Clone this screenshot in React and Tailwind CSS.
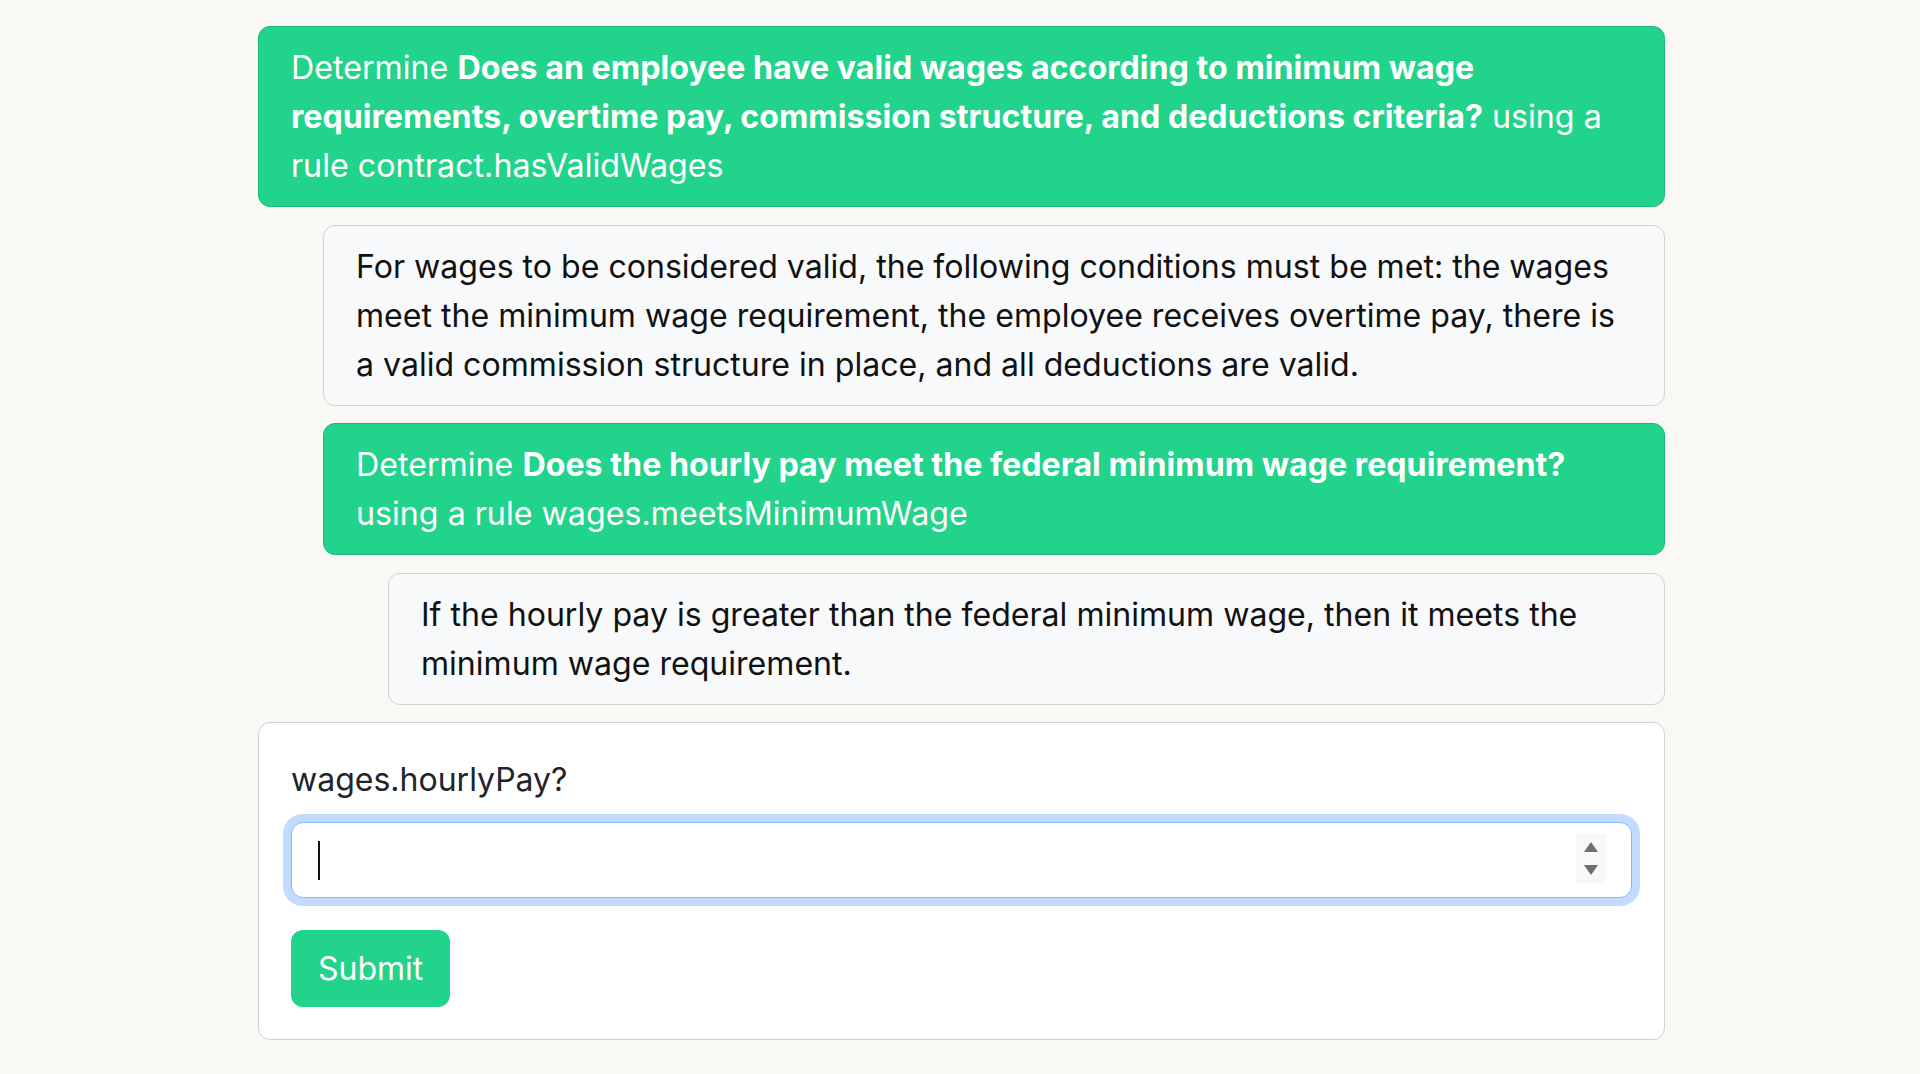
import { useState } from "react";

const steps = [
  {
    kind: "rule",
    depth: 0,
    question:
      "Does an employee have valid wages according to minimum wage requirements, overtime pay, commission structure, and deductions criteria?",
    rule: "contract.hasValidWages",
  },
  {
    kind: "text",
    depth: 1,
    text: "For wages to be considered valid, the following conditions must be met: the wages meet the minimum wage requirement, the employee receives overtime pay, there is a valid commission structure in place, and all deductions are valid.",
  },
  {
    kind: "rule",
    depth: 1,
    question: "Does the hourly pay meet the federal minimum wage requirement?",
    rule: "wages.meetsMinimumWage",
  },
  {
    kind: "text",
    depth: 2,
    text: "If the hourly pay is greater than the federal minimum wage, then it meets the minimum wage requirement.",
  },
];

const indent = ["ml-0", "ml-[65px]", "ml-[130px]"];

const Step = ({ step }) => {
  if (step.kind === "rule") {
    return (
      <div
        className={`${indent[step.depth]} rounded-[12px] border border-[#1cb77b] bg-[#22d38b] px-[32px] py-4 text-[32.2px] leading-[49px] text-white`}
      >
        Determine <span className="font-bold">{step.question}</span> using a
        rule {step.rule}
      </div>
    );
  }
  return (
    <div
      className={`${indent[step.depth]} rounded-[12px] border border-[#cfd0d2] bg-[#f8f9fa] px-[32px] py-4 text-[32.1px] leading-[49px] text-[#111111]`}
    >
      {step.text}
    </div>
  );
};

const App = () => {
  const [value, setValue] = useState("");

  return (
    <div className="min-h-screen bg-[#f9f8f4] font-['Inter','Noto_Sans',sans-serif]">
      <div className="ml-[258px] flex w-[1407px] flex-col gap-[17.5px] pt-[26px] pb-8">
        {steps.map((step, i) => (
          <Step key={i} step={step} />
        ))}

        {/* Question form */}
        <form
          className="rounded-[12px] border border-[#d0d1d3] bg-white px-[32px] pt-[33px] pb-8"
          onSubmit={(e) => e.preventDefault()}
        >
          <label
            htmlFor="hourlyPay"
            className="block text-[32px] leading-[48px] text-[#212529]"
          >
            wages.hourlyPay?
          </label>
          <div className="relative mt-[18px]">
            <input
              id="hourlyPay"
              type="text"
              inputMode="decimal"
              value={value}
              onChange={(e) => setValue(e.target.value)}
              className="block h-[76px] w-full rounded-[12px] border border-[#86b7fe] bg-white px-[26px] text-[32px] text-[#212529] shadow-[0_0_0_8px_#c3dbfe] outline-none"
            />
            {value === "" && (
              <span className="pointer-events-none absolute left-[27px] top-[19px] h-[39px] w-[2px] bg-[#111111]" />
            )}
            <div className="pointer-events-none absolute right-[26px] top-[12px] flex h-[49px] w-[30px] flex-col items-center justify-center gap-[13px] bg-[#f7f8fa]">
              <svg width="14" height="10" viewBox="0 0 14 10">
                <path d="M7 0 L14 10 L0 10 Z" fill="#6f6f6f" />
              </svg>
              <svg width="14" height="10" viewBox="0 0 14 10">
                <path d="M0 0 L14 0 L7 10 Z" fill="#6f6f6f" />
              </svg>
            </div>
          </div>
          <button
            type="submit"
            className="mt-8 rounded-[12px] bg-[#22d38b] px-[27px] py-[14.5px] text-[32px] leading-[48px] text-white"
          >
            Submit
          </button>
        </form>
      </div>
    </div>
  );
};

export default App;
